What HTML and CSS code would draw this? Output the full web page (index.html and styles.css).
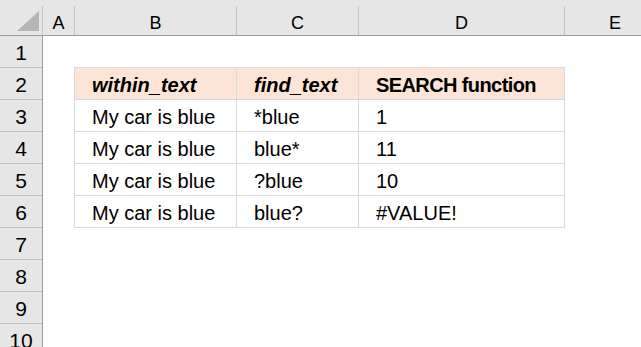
FILE: index.html
```html
<!DOCTYPE html>
<html>
<head>
<meta charset="utf-8">
<link rel="stylesheet" href="styles.css">
</head>
<body>
<div class="sheet">
  <div class="colheads">
    <div class="corner">
      <svg width="22" height="20" viewBox="0 0 22 20"><polygon points="0,20 22,20 22,0" fill="#b5b5b5"/></svg>
    </div>
    <div class="ch ch-a">A</div>
    <div class="ch ch-b">B</div>
    <div class="ch ch-c">C</div>
    <div class="ch ch-d">D</div>
    <div class="ch ch-e">E</div>
  </div>
  <div class="body">
    <div class="rowheads">
      <div class="rh">1</div>
      <div class="rh">2</div>
      <div class="rh">3</div>
      <div class="rh">4</div>
      <div class="rh">5</div>
      <div class="rh">6</div>
      <div class="rh">7</div>
      <div class="rh">8</div>
      <div class="rh">9</div>
      <div class="rh">10</div>
    </div>
    <div class="cells">
      <div class="table">
        <div class="cell head bi">within_text</div>
        <div class="cell head bi">find_text</div>
        <div class="cell head b">SEARCH function</div>

        <div class="cell">My car is blue</div>
        <div class="cell">*blue</div>
        <div class="cell">1</div>

        <div class="cell">My car is blue</div>
        <div class="cell">blue*</div>
        <div class="cell">11</div>

        <div class="cell">My car is blue</div>
        <div class="cell">?blue</div>
        <div class="cell">10</div>

        <div class="cell">My car is blue</div>
        <div class="cell">blue?</div>
        <div class="cell">#VALUE!</div>
      </div>
    </div>
  </div>
</div>
</body>
</html>
```

FILE: styles.css
```css
html, body {
  margin: 0;
  padding: 0;
  background: #ffffff;
}

body {
  width: 641px;
  height: 347px;
  overflow: hidden;
  font-family: "Liberation Sans", Arial, sans-serif;
  color: #000000;
}

.sheet {
  display: flex;
  flex-direction: column;
  width: 641px;
  height: 347px;
  overflow: hidden;
}

.colheads {
  display: flex;
  flex-shrink: 0;
  height: 36px;
  background: #e6e6e6;
  border-bottom: 1px solid #9e9e9e;
  box-sizing: border-box;
  align-items: flex-end;
}

.corner {
  box-sizing: border-box;
  width: 43px;
  height: 29px;
  flex-shrink: 0;
  border-right: 1px solid #c4c4c4;
  display: flex;
  justify-content: flex-end;
  align-items: flex-end;
  padding: 0 3px 4px 0;
}

.ch {
  box-sizing: border-box;
  height: 29px;
  flex-shrink: 0;
  border-right: 1px solid #c4c4c4;
  font-size: 18px;
  line-height: 20px;
  text-align: center;
  padding-top: 7px;
}

.ch-a { width: 32px; }
.ch-b { width: 162px; }
.ch-c { width: 122px; }
.ch-d { width: 206px; }
.ch-e { width: 100px; border-right: none; }

.body {
  display: flex;
  flex: 1;
}

.rowheads {
  display: flex;
  flex-direction: column;
  width: 43px;
  flex-shrink: 0;
  background: #e6e6e6;
  border-right: 1px solid #9e9e9e;
  box-sizing: border-box;
}

.rh {
  box-sizing: border-box;
  height: 32px;
  flex-shrink: 0;
  border-bottom: 1px solid #bebebe;
  font-size: 21px;
  line-height: 24px;
  padding-top: 5px;
  text-align: center;
}

.cells {
  flex: 1;
  padding: 31px 0 0 31px;
}

.table {
  display: grid;
  grid-template-columns: 162px 122px 206px;
  grid-auto-rows: 32px;
  width: max-content;
  border-top: 1px solid #d9d9d9;
  border-left: 1px solid #d9d9d9;
}

.cell {
  box-sizing: border-box;
  border-right: 1px solid #d9d9d9;
  border-bottom: 1px solid #d9d9d9;
  font-size: 20px;
  line-height: 23px;
  padding: 6px 0 0 17px;
  white-space: nowrap;
}

.head {
  background: #fce4d6;
}

.b {
  font-weight: bold;
  letter-spacing: -0.6px;
}

.bi {
  font-weight: bold;
  font-style: italic;
}
```
